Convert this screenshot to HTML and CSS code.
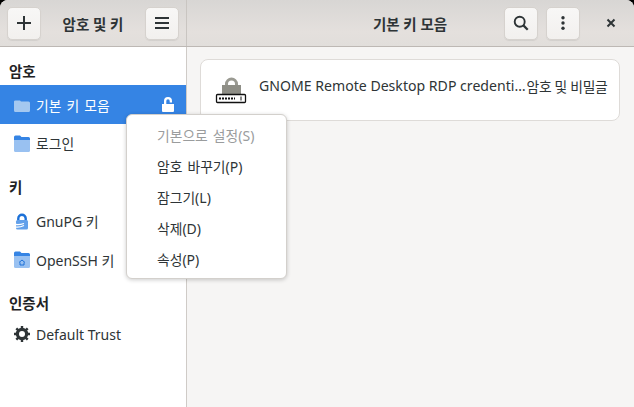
FILE: index.html
```html
<!DOCTYPE html>
<html lang="ko">
<head>
<meta charset="utf-8">
<title>암호 및 키</title>
<link rel="stylesheet" href="styles.css">
</head>
<body>
<div class="window">
  <header class="headerbar">
    <div class="head-left">
      <button class="btn"><svg width="16" height="16" viewBox="0 0 16 16"><path d="M7 1h2v6h6v2H9v6H7V9H1V7h6z" fill="#2e3436"/></svg></button>
      <div class="title title-left">암호 및 키</div>
      <button class="btn"><svg width="16" height="16" viewBox="0 0 16 16"><path d="M1 2h14v2H1zM1 7h14v2H1zM1 12h14v2H1z" fill="#2e3436"/></svg></button>
    </div>
    <div class="head-right">
      <div class="title title-right">기본 키 모음</div>
      <button class="btn"><svg width="16" height="16" viewBox="0 0 16 16"><circle cx="6.7" cy="6.7" r="5" fill="none" stroke="#2e3436" stroke-width="1.9"/><path d="M10.4 10.4l4.3 4.3" stroke="#2e3436" stroke-width="2.2" fill="none"/></svg></button>
      <button class="btn"><svg width="16" height="16" viewBox="0 0 16 16"><circle cx="8" cy="2.8" r="1.7" fill="#2e3436"/><circle cx="8" cy="8" r="1.7" fill="#2e3436"/><circle cx="8" cy="13.2" r="1.7" fill="#2e3436"/></svg></button>
      <div class="close"><svg width="10" height="10" viewBox="0 0 10 10"><path d="M1.5 1.5l7 7M8.500 1.500l-7 7" stroke="#2e3436" stroke-width="2" fill="none"/></svg></div>
    </div>
  </header>
  <div class="body">
    <aside class="sidebar">
      <div class="heading heading-first">암호</div>
      <div class="row row-selected">
        <svg class="icon" width="16" height="16" viewBox="0 0 16 16"><path d="M0 4.500Q0 3.500 1.500 3.500H6l1 1h7.500Q16 4.500 16 6v7.500Q16 15 14.500 15h-13Q0 15 0 13.500z" fill="#a4c8f0"/></svg>
        <span class="label">기본 키 모음</span>
        <svg class="lock" width="14" height="16" viewBox="0 0 14 16"><path d="M3 8V4a4 4 0 0 1 8 0v1.500H8.700V4a1.700 1.700 0 0 0-3.400 0V7H13v7a1 1 0 0 1-1 1H2a1 1 0 0 1-1-1V7h2z" fill="#fff"/></svg>
      </div>
      <div class="row row-login">
        <svg class="icon" width="16" height="17" viewBox="0 0 16 17"><path d="M0 2Q0 .5 1.500 .5H6L7.500 2H14.500Q16 2 16 3.500V6H0z" fill="#3584e4"/><path d="M0 5h16v10.500Q16 17 14.500 17h-13Q0 17 0 15.500z" fill="#99c1f1"/></svg>
        <span class="label">로그인</span>
      </div>
      <div class="heading heading-key">키</div>
      <div class="row row-gpg">
        <svg class="icon icon-gpg" width="14" height="17" viewBox="0 0 14 17"><path d="M3.300 8V5.500a3.700 3.700 0 0 1 7.400 0V8" fill="none" stroke="#1c71d8" stroke-width="2.400"/><rect x="1" y="7" width="12" height="9.500" rx="1.500" fill="#62a0ea"/><path d="M1 11.500c3 .5 5 0 8-1M0 14c3 .5 6 0 9-1.500" fill="none" stroke="#fff" stroke-width="1.300"/></svg>
        <span class="label"><span class="latin">GnuPG 키</span></span>
      </div>
      <div class="row">
        <svg class="icon" width="16" height="17" viewBox="0 0 16 17"><path d="M0 2Q0 .5 1.500 .5H6L7.500 2H14.500Q16 2 16 3.500V6H0z" fill="#3584e4"/><path d="M0 5h16v10.500Q16 17 14.500 17h-13Q0 17 0 15.500z" fill="#99c1f1"/><path d="M5 11.500L8 9l3 2.500M6 11.500V14h4v-2.500" fill="none" stroke="#1c71d8" stroke-width="1"/></svg>
        <span class="label"><span class="latin">OpenSSH 키</span></span>
      </div>
      <div class="heading heading-cert">인증서</div>
      <div class="row row-trust">
        <svg class="icon" width="16" height="16" viewBox="0 0 16 16"><circle cx="8" cy="8" r="4.700" fill="none" stroke="#2e3436" stroke-width="3"/><path d="M8 0v16M0 8h16M2.300 2.300l11.400 11.400M13.700 2.300L2.300 13.700" stroke="#2e3436" stroke-width="2.400"/><circle cx="8" cy="8" r="3" fill="#fff"/></svg>
        <span class="label latin">Default Trust</span>
      </div>
    </aside>
    <main class="content">
      <div class="card">
        <svg class="keyring" width="32" height="33" viewBox="0 0 32 33">
          <path d="M10 15v-2a6.500 6.500 0 0 1 13 0v2h-3v-2a3.500 3.500 0 0 0-7 0v2z" fill="#9a9a92"/>
          <rect x="7" y="14" width="19" height="9.500" fill="#8e8e86"/>
          <rect x="1.500" y="23.500" width="29" height="8" rx="1" fill="#fff" stroke="#111" stroke-width="1.300"/>
          <path d="M4 27.500h16" stroke="#111" stroke-width="2" stroke-dasharray="2 1"/>
          <path d="M26 25.500v4" stroke="#111" stroke-width="1"/>
        </svg>
        <span class="card-name latin">GNOME Remote Desktop RDP credenti…</span>
        <span class="card-type">암호 및 비밀글</span>
      </div>
    </main>
  </div>
  <nav class="menu">
    <div class="menu-item disabled">기본으로 설정<span class="latin">(S)</span></div>
    <div class="menu-item">암호 바꾸기<span class="latin">(P)</span></div>
    <div class="menu-item">잠그기<span class="latin">(L)</span></div>
    <div class="menu-item">삭제<span class="latin">(D)</span></div>
    <div class="menu-item">속성<span class="latin">(P)</span></div>
  </nav>
</div>
</body>
</html>
```
FILE: styles.css
```css
* { box-sizing: border-box; }
html, body { margin: 0; padding: 0; background: #000; }
body { width: 634px; height: 407px; overflow: hidden; font-family: "Noto Sans", "Noto Sans CJK KR", sans-serif; font-size: 13.800px; word-spacing: 1.500px; color: #2e3436; }
.window { position: relative; width: 634px; height: 407px; border-radius: 8px 8px 0 0; overflow: hidden; background: #f6f5f4; display: flex; flex-direction: column; }
.headerbar { height: 47px; flex: none; display: flex; background: linear-gradient(#d8d6d4, #e4e0dd 70%, #e1dedb); border-bottom: 1px solid #bdb8b4; }
.head-left { width: 187px; flex: none; display: flex; align-items: center; padding: 0 7px; border-right: 1px solid #c9c5c1; }
.head-right { flex: 1; display: flex; align-items: center; justify-content: flex-end; padding-right: 6px; position: relative; }
.title { font-weight: 700; font-size: 14.500px; word-spacing: 0; color: #2e3436; white-space: nowrap; }
.title-left { flex: 1; text-align: center; }
.title-right { flex: 1; text-align: center; padding-left: 137px; }
.btn { width: 34px; height: 33px; margin: 0; padding: 0; border: 1px solid #d6d2ce; border-radius: 5px; background: linear-gradient(#f8f7f6, #f2f0ee); box-shadow: 0 1px 1px rgba(0, 0, 0, .07); display: flex; align-items: center; justify-content: center; }
.head-right .btn { margin-left: 8px; }
.close { width: 34px; height: 33px; margin-left: 14px; display: flex; align-items: center; justify-content: center; }
.body { flex: 1; display: flex; min-height: 0; }
.sidebar { width: 187px; flex: none; background: #fff; border-right: 1px solid #cfcbc7; display: flex; flex-direction: column; }
.heading { font-weight: 700; font-size: 14.500px; word-spacing: 0; color: #1f2325; padding-left: 9px; line-height: 20px; }
.heading-first { margin-top: 14px; margin-bottom: 4px; }
.heading-key { margin-top: 15px; margin-bottom: 5px; }
.heading-cert { margin-top: 14px; margin-bottom: 2px; }
.row { height: 39px; display: flex; align-items: center; padding-left: 14px; gap: 6px; }
.row-selected { background: #3584e4; color: #fff; position: relative; }
.row-login { height: 38px; }
.row-gpg { height: 38px; }
.row-trust { height: 38px; }
.icon { flex: none; }
.icon-gpg { margin-left: 1px; margin-right: 1px; }
.label { white-space: nowrap; }
.latin { font-size: 14px; word-spacing: 0; }
.lock { position: absolute; left: 161px; top: 12px; }
.content { flex: 1; padding: 12px 14px 0 13px; }
.card { height: 62px; background: #fff; border: 1px solid #dedbd8; border-radius: 8px; display: flex; align-items: center; padding-left: 14px; white-space: nowrap; }
.keyring { flex: none; margin-bottom: 6px; }
.card-name { margin-left: 12px; margin-top: -9px; font-size: 14.100px; }
.card-type { margin-left: 1px; margin-top: -9px; word-spacing: 0; letter-spacing: -.3px; }
.menu { position: absolute; left: 126px; top: 114px; width: 161px; height: 165px; background: #fff; border: 1px solid #d3d0cc; border-radius: 6px; box-shadow: 0 1px 4px rgba(0, 0, 0, .2); padding: 5px 0 0; display: flex; flex-direction: column; }
.menu-item { height: 31px; line-height: 31px; padding-left: 30px; white-space: nowrap; }
.disabled { color: #9a9c9d; }
```
